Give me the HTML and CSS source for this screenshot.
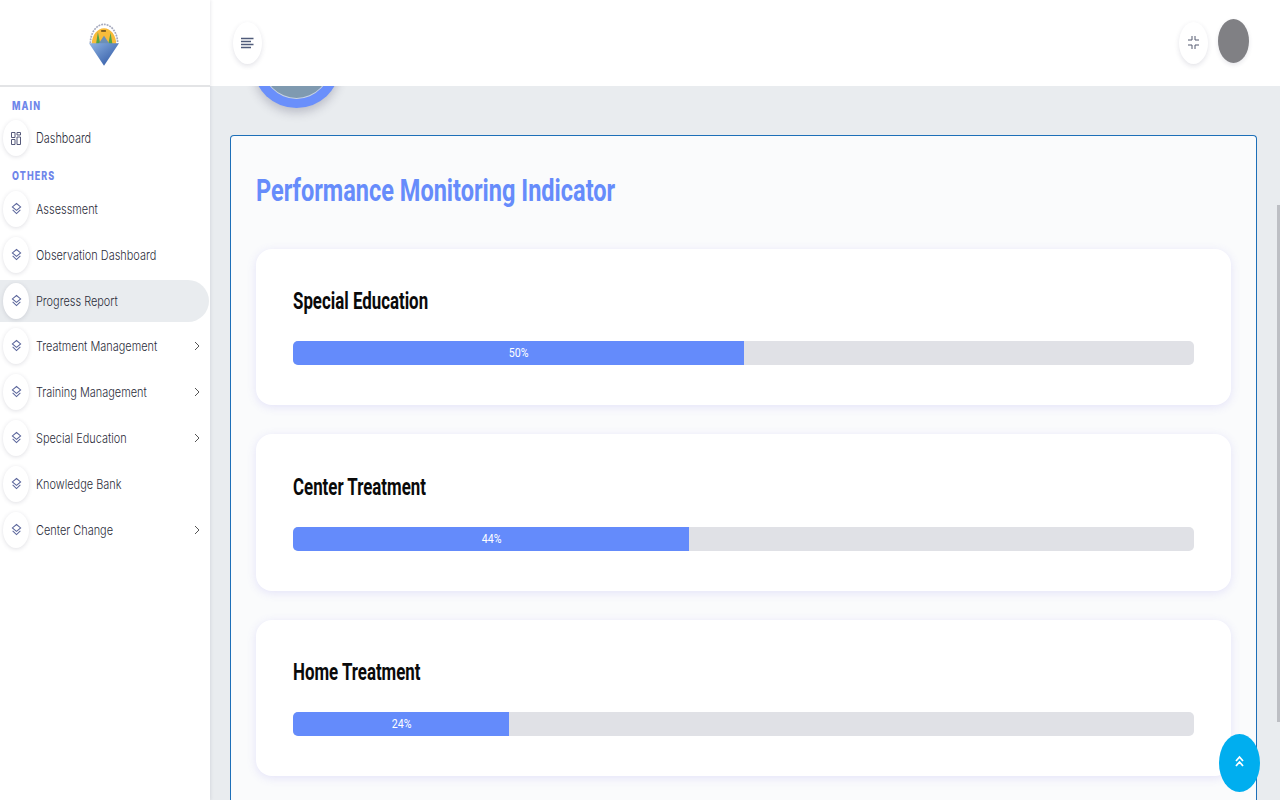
FILE: index.html
```html
<!DOCTYPE html>
<html lang="en">
<head>
<meta charset="utf-8">
<title>Performance Monitoring Indicator</title>
<link rel="stylesheet" href="styles.css">
</head>
<body>
<svg class="defs" width="0" height="0">
  <defs>
    <linearGradient id="water" x1="0" y1="0" x2="1" y2="1"><stop offset="0" stop-color="#8fb4e3"/><stop offset="1" stop-color="#27509f"/></linearGradient>
  </defs>
  <symbol id="layers" viewBox="0 0 12 14"><path d="M6 1 10.500 4.800 6 8.400 1.500 4.800Z" fill="none" stroke="#5a659b" stroke-width="1.100"/><path d="M1.800 8 6 12 10.200 8" fill="none" stroke="#5a659b" stroke-width="1.100"/></symbol>
  <symbol id="chev" viewBox="0 0 6 10"><path d="M1 1 5 5 1 9" fill="none" stroke="#555" stroke-width="1"/></symbol>
</svg>
<div class="app">
  <aside class="sidebar">
    <div class="brand">
      <svg class="logo" width="30" height="44" viewBox="0 0 32 46">
        <path d="M3 22A13 17 0 0 1 29 22Z" fill="#f8bb3a"/>
        <path d="M1.500 21A14.500 20 0 0 1 30.500 21" fill="none" stroke="#a5a9bd" stroke-width="1.800" stroke-dasharray="2 1"/>
        <path d="M16 6h5v2h-5z" fill="#7a5a20" transform="translate(-3 1)"/>
        <path d="M7.500 22 9.500 9 12 22ZM20.500 22 23 10 25 22Z" fill="#52a348"/>
        <path d="M10 22 16 13 22 22Z" fill="#6c8fb6"/>
        <path d="M0 21H32L16 45Z" fill="url(#water)"/>
      </svg>
    </div>
    <nav class="nav">
      <div class="nav-label">MAIN</div>
      <a class="item item-dash"><span class="ico"><svg width="10" height="13" viewBox="0 0 10 13"><path d="M.5.500H4V5.500H.5ZM6 .5H9.500V3H6ZM6 5H9.500V12.500H6ZM.5 7.500H4V12.500H.5Z" fill="none" stroke="#55597a"/></svg></span><span class="txt txt-dash">Dashboard</span></a>
      <div class="nav-label nav-label-others">OTHERS</div>
      <a class="item"><span class="ico"><svg class="lay" width="11" height="14"><use href="#layers"/></svg></span><span class="txt">Assessment</span></a>
      <a class="item"><span class="ico"><svg class="lay" width="11" height="14"><use href="#layers"/></svg></span><span class="txt">Observation Dashboard</span></a>
      <a class="item active"><span class="ico"><svg class="lay" width="11" height="14"><use href="#layers"/></svg></span><span class="txt">Progress Report</span></a>
      <a class="item"><span class="ico"><svg class="lay" width="11" height="14"><use href="#layers"/></svg></span><span class="txt">Treatment Management</span><svg class="chev" width="6" height="10"><use href="#chev"/></svg></a>
      <a class="item"><span class="ico"><svg class="lay" width="11" height="14"><use href="#layers"/></svg></span><span class="txt">Training Management</span><svg class="chev" width="6" height="10"><use href="#chev"/></svg></a>
      <a class="item"><span class="ico"><svg class="lay" width="11" height="14"><use href="#layers"/></svg></span><span class="txt">Special Education</span><svg class="chev" width="6" height="10"><use href="#chev"/></svg></a>
      <a class="item"><span class="ico"><svg class="lay" width="11" height="14"><use href="#layers"/></svg></span><span class="txt">Knowledge Bank</span></a>
      <a class="item"><span class="ico"><svg class="lay" width="11" height="14"><use href="#layers"/></svg></span><span class="txt">Center Change</span><svg class="chev" width="6" height="10"><use href="#chev"/></svg></a>
    </nav>
  </aside>
  <div class="main">
    <header class="topbar">
      <button class="round"><svg width="13" height="13" viewBox="0 0 13 13"><path d="M0 1.500H12.500M0 4.500H10M0 7.500H12.500M0 10.500H10" stroke="#4f5b7a" stroke-width="1.700"/></svg></button>
      <div class="top-right">
        <button class="round round-compress"><svg width="11" height="13" viewBox="0 0 11 13"><path d="M4 0V4H0M7 0V4H11M4 13V9H0M7 13V9H11" fill="none" stroke="#555a70"/></svg></button>
        <div class="avatar"></div>
      </div>
    </header>
    <div class="content">
      <div class="photo-strip"><div class="photo"><div class="photo-in"></div></div></div>
      <section class="panel">
        <h1 class="title"><span>Performance Monitoring Indicator</span></h1>
        <div class="stat">
          <h2 class="stat-name"><span>Special Education</span></h2>
          <div class="track"><div class="fill" style="width:50%"><span>50%</span></div></div>
        </div>
        <div class="stat">
          <h2 class="stat-name"><span>Center Treatment</span></h2>
          <div class="track"><div class="fill" style="width:44%"><span>44%</span></div></div>
        </div>
        <div class="stat">
          <h2 class="stat-name"><span>Home Treatment</span></h2>
          <div class="track"><div class="fill" style="width:24%"><span>24%</span></div></div>
        </div>
      </section>
    </div>
    <div class="scrollthumb"></div>
    <button class="to-top"><svg width="9" height="13" viewBox="0 0 9 13"><path d="M1 6 4.500 2 8 6M1 11 4.500 7 8 11" fill="none" stroke="#fff" stroke-width="1.800"/></svg></button>
  </div>
</div>
</body>
</html>
```
FILE: styles.css
```css
* { box-sizing: border-box; }
html, body { margin: 0; height: 800px; overflow: hidden; }
body { font-family: "Inter", "Liberation Sans", sans-serif; background: #e9ecef; }
.defs { position: absolute; }
button { border: 0; padding: 0; font: inherit; cursor: pointer; }

.app { display: grid; grid-template-columns: 210px 1fr; height: 800px; }

.sidebar { background: #fff; height: 800px; box-shadow: 1px 0 3px rgba(60,60,90,.1); position: relative; z-index: 2; }
.brand { height: 87px; display: flex; justify-content: center; align-items: center; border-bottom: 2px solid #e3e4e6; padding-top: 5px; padding-right: 2px; }
.logo { display: block; }
.nav { display: flex; flex-direction: column; }
.nav-label { font: 800 11.500px/14px "Inter", sans-serif; letter-spacing: 1.400px; color: #6f86ea; margin-top: 12px; height: 14px; padding-left: 12px; transform: scaleX(.78); transform-origin: 12px center; }
.nav-label-others { margin-top: 13px; }
.item { display: flex; align-items: center; height: 45.800px; color: #2b2d3a; position: relative; }
.item-dash { height: 36px; margin-top: 7px; }
.nav-label-others + .item { margin-top: 3px; }
.ico { width: 26px; height: 36px; margin-left: 3px; border-radius: 50%; background: #fff; box-shadow: 0 1px 4px rgba(60,60,90,.16); display: flex; align-items: center; justify-content: center; flex: none; }
.txt { margin-left: 7px; font-size: 13.500px; font-weight: 300; line-height: 16px; display: inline-block; transform: scaleX(.81); transform-origin: left center; white-space: nowrap; }
.txt-dash { font-size: 14.500px; transform: scaleX(.75); }
.chev { position: absolute; left: 194px; top: calc(50% - 5px); }
.active { background: #e9ecef; margin-right: 1px; border-radius: 0 22px 22px 0; height: 42px; margin-top: 2px; margin-bottom: 2px; }

.main { position: relative; min-width: 0; height: 800px; }
.topbar { height: 86px; background: #fff; display: flex; align-items: center; justify-content: space-between; padding: 0 31px 0 23px; position: relative; z-index: 1; }
.round { width: 29px; height: 42px; border-radius: 50%; background: #fff; box-shadow: 0 2px 5px rgba(60,60,90,.14); display: flex; align-items: center; justify-content: center; }
.round-compress { margin-bottom: 1px; }
.top-right { display: flex; align-items: center; gap: 10px; }
.avatar { width: 31px; height: 44px; margin-bottom: 4px; border-radius: 50%; background: #808084; box-shadow: 0 2px 4px rgba(60,60,90,.12); }

.content { padding: 0 23px 0 20px; }
.photo-strip { height: 49px; overflow: hidden; padding-left: 24px; }
.photo { width: 85px; height: 80px; margin-top: -58px; border-radius: 50%; background: #6a8ffb; padding: 0 8px 9px; box-shadow: 0 5px 10px rgba(60,60,90,.25); }
.photo-in { height: 71px; border-radius: 50%; background: #7f9ab0; border: 1px solid #c9d4e4; }

.panel { background: #fafbfc; border: 1px solid #1d6fb8; border-bottom: 0; border-radius: 4px 4px 0 0; padding: 0 25px; height: 665px; }
.title { margin: 0; height: 113px; padding-top: 36px; font: 700 32px/37px "Roboto", sans-serif; color: #668cfb; }
.title span { display: inline-block; transform: scaleX(.735); transform-origin: left center; white-space: nowrap; }
.stat { background: #fff; height: 156px; border-radius: 16px; padding: 38px 37px 0; margin-bottom: 29px; box-shadow: 0 2px 10px rgba(110,100,230,.16); }
.stat:nth-of-type(2) { height: 157px; padding-top: 39px; }
.stat:last-child { margin-bottom: 0; }
.stat-name { margin: 0; height: 30px; font: 700 23px/30px "Roboto", sans-serif; color: #0a0a0a; }
.stat-name span { display: inline-block; transform: scaleX(.733); transform-origin: left center; white-space: nowrap; }
.track { height: 24px; margin-top: 24px; background: #e0e1e6; border-radius: 5px; overflow: hidden; }
.fill { height: 24px; background: #648bfb; color: #fff; font: 400 12.500px/24px "Roboto", sans-serif; text-align: center; }
.fill span { display: inline-block; transform: scaleX(.85); }

.scrollthumb { position: absolute; right: 0; top: 205px; width: 3px; height: 517px; background: #bdbfc4; }
.to-top { position: absolute; left: 1009px; top: 734px; width: 41px; height: 58px; border-radius: 50%; background: #00aeef; display: flex; align-items: center; justify-content: center; z-index: 3; padding-bottom: 4px; }
```
